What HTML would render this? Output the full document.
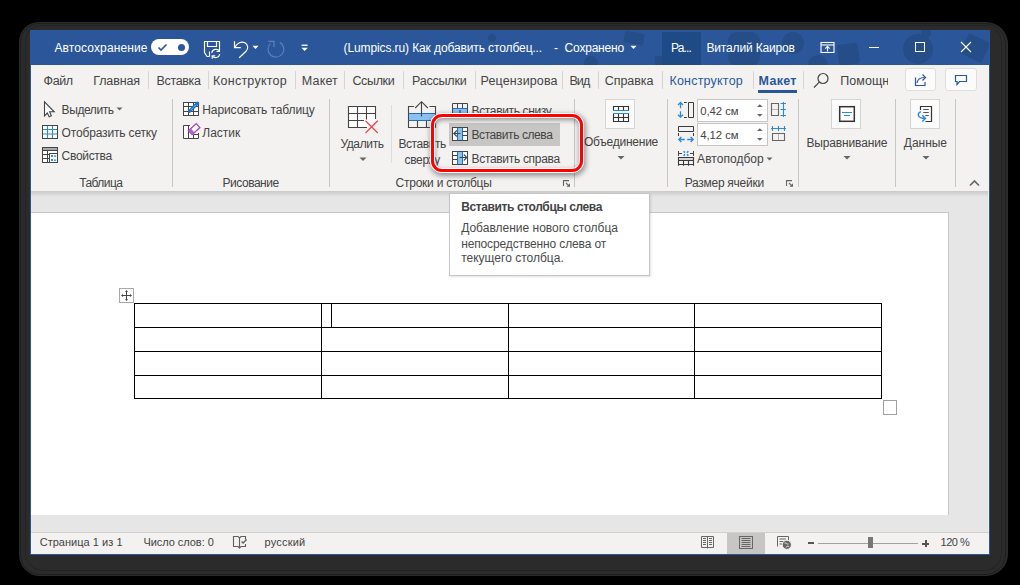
<!DOCTYPE html>
<html><head><meta charset="utf-8"><style>
html,body{margin:0;padding:0;}
body{width:1020px;height:585px;background:#000;position:relative;overflow:hidden;font-family:"Liberation Sans",sans-serif;}
.t{position:absolute;white-space:nowrap;line-height:1;}
.r{position:absolute;}
</style></head><body>
<div class="r" style="left:19px;top:22px;width:989px;height:554px;background:#2b2b2b;border-radius:20px 22px 22px 21px;"></div><div class="r" style="left:20px;top:23px;width:986px;height:552px;border:1px solid #1e1e1e;border-radius:19px 21px 21px 20px;box-sizing:border-box;"></div><div class="r" style="left:25px;top:25px;width:977px;height:546px;border:1px solid #232323;border-radius:16px 18px 18px 18px;box-sizing:border-box;"></div><div class="r" style="left:30px;top:30px;width:960px;height:525px;background:#f3f2f1;border:1px solid #2b579a;box-sizing:border-box;"></div><div class="r" style="left:30px;top:30px;width:960px;height:35px;background:#2b579a;"></div><svg class="r" style="left:31px;top:30px" width="958" height="35" viewBox="31 0 958 35">
<g fill="#254d88">
<circle cx="918" cy="19" r="15"/><circle cx="926" cy="3" r="5"/>
<rect x="838" y="14" width="21" height="21" rx="3" transform="rotate(-8 848 25)"/>
<path d="M808 35 A10 10 0 0 1 828 35 Z"/>
<circle cx="793" cy="13" r="11"/>
<rect x="963" y="7" width="24" height="22" rx="3" transform="rotate(25 975 18)"/>
<rect x="728" y="2" width="32" height="34" rx="9"/>
<rect x="624" y="2" width="20" height="12" rx="3" transform="rotate(10 634 8)"/>
<circle cx="591" cy="33" r="7"/>
<circle cx="492" cy="8" r="4"/>
<rect x="655" y="26" width="14" height="10" rx="2"/>
</g></svg><div class="t" style="left:54.50px;top:42.34px;font-size:12px;color:#fff;letter-spacing:0.110px;">Автосохранение</div><div class="r" style="left:151px;top:39px;width:38px;height:16px;background:#fff;border-radius:8px;"></div><svg class="r" style="left:157px;top:43px" width="11" height="9" viewBox="0 0 11 9"><path d="M1.5 4.5 L4 7 L9.5 1.5" fill="none" stroke="#2b579a" stroke-width="1.6"/></svg><div class="r" style="left:177.8px;top:43.7px;width:7px;height:7px;background:#2b579a;border-radius:50%;"></div><svg class="r" style="left:203px;top:40px" width="19" height="19" viewBox="0 0 19 19"><g fill="none" stroke="#fff" stroke-width="1.15">
<path d="M16.5 8.5 V1.5 H1.5 V12.5 L4 16.5 H6.5"/><path d="M4.5 1.5 V6.5 H13.5 V1.5"/><path d="M6.5 11.5 V16.5"/>
<path d="M8.8 12.8 A4.3 4.3 0 0 1 16.5 11"/><path d="M16.8 14.2 A4.3 4.3 0 0 1 9.2 16"/>
<path d="M16.5 8.3 V11.3 H13.5"/><path d="M9.2 18.8 V15.8 H12.2"/>
</g></svg><svg class="r" style="left:232px;top:40px" width="18" height="19" viewBox="0 0 18 19"><g fill="none" stroke="#fff" stroke-width="1.2"><path d="M2.5 1.3 V7.7 H8.8"/><path d="M2.6 7.6 C5 3 9.5 0.8 13 2.8 C16.3 4.8 16.5 8.8 14 11.3 L7.2 17.7"/></g></svg><svg class="r" style="left:252px;top:45px" width="7" height="5" viewBox="0 0 7 5"><path d="M0.5 0.8 H6.5 L3.5 4 Z" fill="#fff"/></svg><svg class="r" style="left:266px;top:39px" width="20" height="20" viewBox="0 0 20 20"><g fill="none" stroke="#5b80bb" stroke-width="1.2"><path d="M13.85 3.36 A7.9 7.9 0 1 1 4.3 4.6"/><path d="M2.3 2.3 H8 V7.9"/></g></svg><svg class="r" style="left:300px;top:44px" width="9" height="8" viewBox="0 0 9 8"><g fill="#fff"><rect x="1.6" y="0.6" width="6" height="1.3"/><path d="M1.4 3.8 H7.8 L4.6 7 Z"/></g></svg><div class="t" style="left:343.60px;top:42.34px;font-size:12px;color:#fff;letter-spacing:-0.110px;">(Lumpics.ru) Как добавить столбец...</div><div class="t" style="left:554.00px;top:42.34px;font-size:12px;color:#fff;letter-spacing:0.000px;">-</div><div class="t" style="left:564.60px;top:42.34px;font-size:12px;color:#fff;letter-spacing:-0.205px;">Сохранено</div><svg class="r" style="left:630px;top:45px" width="7" height="5" viewBox="0 0 7 5"><path d="M0.5 0.8 H6.5 L3.5 4 Z" fill="#fff"/></svg><div class="r" style="left:662px;top:32px;width:39px;height:33px;background:#1e4a86;"></div><div class="t" style="left:671.00px;top:41.94px;font-size:12px;color:#fff;letter-spacing:-0.853px;">Ра...</div><div class="t" style="left:706.50px;top:41.94px;font-size:12px;color:#fff;letter-spacing:-0.168px;">Виталий Каиров</div><svg class="r" style="left:820px;top:41px" width="15" height="12" viewBox="0 0 15 12"><g fill="none" stroke="#fff" stroke-width="1.1"><rect x="1" y="1.5" width="13" height="10"/><path d="M1 4 H14"/><path d="M7.5 10.5 V5.5 M5.3 7.6 L7.5 5.4 L9.7 7.6"/></g></svg><div class="r" style="left:869px;top:47px;width:10px;height:1px;background:#fff;"></div><div class="r" style="left:915px;top:42px;width:10px;height:10px;border:1px solid #fff;box-sizing:border-box;"></div><svg class="r" style="left:960px;top:41px" width="12" height="12" viewBox="0 0 12 12"><g stroke="#fff" stroke-width="1.1"><path d="M1 1 L11 11 M11 1 L1 11"/></g></svg><div class="r" style="left:148px;top:71px;width:1px;height:18px;background:#d6d5d4;"></div><div class="r" style="left:208px;top:71px;width:1px;height:18px;background:#d6d5d4;"></div><div class="r" style="left:295px;top:71px;width:1px;height:18px;background:#d6d5d4;"></div><div class="r" style="left:344px;top:71px;width:1px;height:18px;background:#d6d5d4;"></div><div class="r" style="left:403px;top:71px;width:1px;height:18px;background:#d6d5d4;"></div><div class="r" style="left:475px;top:71px;width:1px;height:18px;background:#d6d5d4;"></div><div class="r" style="left:562px;top:71px;width:1px;height:18px;background:#d6d5d4;"></div><div class="r" style="left:598px;top:71px;width:1px;height:18px;background:#d6d5d4;"></div><div class="r" style="left:662px;top:71px;width:1px;height:18px;background:#d6d5d4;"></div><div class="r" style="left:753px;top:71px;width:1px;height:18px;background:#d6d5d4;"></div><div class="r" style="left:803px;top:71px;width:1px;height:18px;background:#d6d5d4;"></div><div class="t" style="left:43.50px;top:74.92px;font-size:12.5px;color:#444444;letter-spacing:-0.359px;">Файл</div><div class="t" style="left:93.20px;top:74.92px;font-size:12.5px;color:#444444;letter-spacing:-0.111px;">Главная</div><div class="t" style="left:156.50px;top:74.92px;font-size:12.5px;color:#444444;letter-spacing:-0.338px;">Вставка</div><div class="t" style="left:213.00px;top:74.92px;font-size:12.5px;color:#444444;letter-spacing:0.249px;">Конструктор</div><div class="t" style="left:301.80px;top:74.92px;font-size:12.5px;color:#444444;letter-spacing:0.168px;">Макет</div><div class="t" style="left:352.40px;top:74.92px;font-size:12.5px;color:#444444;letter-spacing:-0.336px;">Ссылки</div><div class="t" style="left:412.00px;top:74.92px;font-size:12.5px;color:#444444;letter-spacing:-0.201px;">Рассылки</div><div class="t" style="left:480.60px;top:74.92px;font-size:12.5px;color:#444444;letter-spacing:0.118px;">Рецензирова</div><div class="t" style="left:569.40px;top:74.92px;font-size:12.5px;color:#444444;letter-spacing:-0.875px;">Вид</div><div class="t" style="left:604.70px;top:74.92px;font-size:12.5px;color:#444444;letter-spacing:-0.035px;">Справка</div><div class="t" style="left:669.40px;top:74.92px;font-size:12.5px;color:#2b579a;letter-spacing:0.212px;">Конструктор</div><div class="t" style="left:758.50px;top:74.92px;font-size:12.5px;color:#2b579a;letter-spacing:0.326px;font-weight:bold;">Макет</div><div class="r" style="left:758px;top:90px;width:39px;height:3px;background:#2b579a;"></div><svg class="r" style="left:812px;top:72px" width="18" height="17" viewBox="0 0 18 17"><g fill="none" stroke="#444" stroke-width="1.2"><circle cx="11" cy="6.5" r="5"/><path d="M7.3 10.2 L2 15.5"/></g></svg><div class="t" style="left:840.20px;top:74.92px;font-size:12.5px;color:#444444;letter-spacing:0.055px;width:47.5px;overflow:hidden;height:16px;">Помощн</div><div class="r" style="left:905px;top:68px;width:31px;height:23px;background:#fbfbfb;border:1px solid #dedede;border-radius:3px;box-sizing:border-box;"></div><svg class="r" style="left:912px;top:72px" width="16" height="15" viewBox="0 0 16 15"><g fill="none" stroke="#2b579a" stroke-width="1.2"><path d="M3.5 5.5 V13.5 H13 V10"/><path d="M5 11 C5.5 7.5 8 5.5 12.5 5.5"/><path d="M10.5 2.5 L13.5 5.5 L10.5 8.5"/></g></svg><div class="r" style="left:945px;top:68px;width:32px;height:23px;background:#fbfbfb;border:1px solid #dedede;border-radius:3px;box-sizing:border-box;"></div><svg class="r" style="left:954px;top:74px" width="14" height="12" viewBox="0 0 14 12"><g fill="none" stroke="#2b579a" stroke-width="1.2"><path d="M1.5 1.5 H12.5 V7.5 H5.5 L3 10.5 V7.5 H1.5 Z"/></g></svg><div class="r" style="left:172px;top:99px;width:1px;height:88px;background:#c8c6c4;"></div><div class="r" style="left:329px;top:99px;width:1px;height:88px;background:#c8c6c4;"></div><div class="r" style="left:574px;top:99px;width:1px;height:88px;background:#c8c6c4;"></div><div class="r" style="left:667px;top:99px;width:1px;height:88px;background:#c8c6c4;"></div><div class="r" style="left:798px;top:99px;width:1px;height:88px;background:#c8c6c4;"></div><div class="r" style="left:895px;top:99px;width:1px;height:88px;background:#c8c6c4;"></div><div class="r" style="left:955px;top:99px;width:1px;height:88px;background:#c8c6c4;"></div><div class="r" style="left:391px;top:105px;width:1px;height:58px;background:#dedcdb;"></div><div class="t" style="left:61.60px;top:104.34px;font-size:12px;color:#444444;letter-spacing:-0.420px;">Выделить</div><div class="t" style="left:61.60px;top:127.34px;font-size:12px;color:#444444;letter-spacing:-0.162px;">Отобразить сетку</div><div class="t" style="left:61.60px;top:150.34px;font-size:12px;color:#444444;letter-spacing:-0.311px;">Свойства</div><div class="t" style="left:79.20px;top:177.14px;font-size:12px;color:#444444;letter-spacing:-0.538px;">Таблица</div><div class="t" style="left:202.30px;top:104.34px;font-size:12px;color:#444444;letter-spacing:-0.100px;">Нарисовать таблицу</div><div class="t" style="left:202.30px;top:127.34px;font-size:12px;color:#444444;letter-spacing:0.000px;">Ластик</div><div class="t" style="left:222.60px;top:177.14px;font-size:12px;color:#444444;letter-spacing:-0.491px;">Рисование</div><div class="t" style="left:340.40px;top:137.74px;font-size:12px;color:#444444;letter-spacing:-0.359px;">Удалить</div><div class="t" style="left:398.40px;top:138.24px;font-size:12px;color:#444444;letter-spacing:-0.432px;">Вставить</div><div class="t" style="left:404.60px;top:153.74px;font-size:12px;color:#444444;letter-spacing:-0.374px;">сверху</div><div class="t" style="left:471.50px;top:105.14px;font-size:12px;color:#444444;letter-spacing:-0.348px;">Вставить снизу</div><div class="t" style="left:395.60px;top:177.14px;font-size:12px;color:#444444;letter-spacing:-0.248px;">Строки и столбцы</div><div class="r" style="left:449px;top:123px;width:111px;height:23px;background:#c8c6c4;"></div><div class="t" style="left:471.50px;top:128.94px;font-size:12px;color:#444444;letter-spacing:-0.419px;">Вставить слева</div><div class="t" style="left:471.50px;top:152.94px;font-size:12px;color:#444444;letter-spacing:-0.309px;">Вставить справа</div><div class="r" style="left:605px;top:99px;width:30px;height:30px;background:#fbfbfb;border:1px solid #d4d4d4;box-sizing:border-box;"></div><div class="t" style="left:584.00px;top:136.24px;font-size:12px;color:#444444;letter-spacing:-0.247px;">Объединение</div><div class="r" style="left:697px;top:99px;width:71px;height:23px;background:#fff;border:1px solid #c8c6c4;box-sizing:border-box;"></div><div class="t" style="left:700.30px;top:105.63px;font-size:11.3px;color:#444444;letter-spacing:-0.050px;">0,42 см</div><div class="r" style="left:697px;top:123px;width:71px;height:23px;background:#fff;border:1px solid #c8c6c4;box-sizing:border-box;"></div><div class="t" style="left:700.30px;top:130.03px;font-size:11.3px;color:#444444;letter-spacing:-0.050px;">4,12 см</div><div class="t" style="left:697.10px;top:152.84px;font-size:12px;color:#444444;letter-spacing:0.043px;">Автоподбор</div><div class="t" style="left:684.70px;top:176.84px;font-size:12px;color:#444444;letter-spacing:-0.272px;">Размер ячейки</div><div class="r" style="left:831px;top:99px;width:30px;height:30px;background:#fbfbfb;border:1px solid #d4d4d4;box-sizing:border-box;"></div><div class="t" style="left:806.40px;top:136.74px;font-size:12px;color:#444444;letter-spacing:-0.148px;">Выравнивание</div><div class="r" style="left:910px;top:99px;width:30px;height:30px;background:#fbfbfb;border:1px solid #d4d4d4;box-sizing:border-box;"></div><div class="t" style="left:903.80px;top:136.74px;font-size:12px;color:#444444;letter-spacing:-0.024px;">Данные</div><svg class="r" style="left:0;top:0" width="1020" height="585" viewBox="0 0 1020 585">
<g fill="none" stroke="#444" stroke-width="1">
<!-- cursor -->
<path d="M44.5 101.8 V115.8 L47.3 113 L49.2 116.8 L51.4 115.8 L49.6 111.8 L54.2 111.8 Z" fill="#fff" stroke-width="1.1"/>
<!-- grid icon -->
<rect x="42.5" y="125.5" width="15" height="13" fill="#fff"/>
<!-- properties -->
<rect x="42.5" y="147.5" width="15" height="15" fill="#fff"/>
<path d="M42.5 150.5 H57.5 M47.5 150.5 V162.5 M42.5 154.5 H49.5 M42.5 158.5 H49.5"/><rect x="43" y="148" width="14" height="2" fill="#a8a8a8" stroke="none"/>
<rect x="49.5" y="153.5" width="8" height="9" fill="#fff"/>
<!-- draw table -->
<rect x="183.5" y="102.5" width="15" height="13" fill="#fff"/>
<path d="M188.5 102.5 V115.5 M193.5 102.5 V115.5 M183.5 106.5 H198.5 M183.5 111.5 H198.5"/>
<!-- eraser frame -->
<path d="M190 125.5 H183.5 V138.5 H198.5 V133 M188.5 125.5 V138.5 M193.5 134.5 V138.5 M193.5 134.5 H198.5" fill="#fff"/>
<!-- delete icon -->
<path d="M367 127.5 H348.5 V106.5 H375.5 V119 M357.5 106.5 V127.5 M366.5 106.5 V119.5 M348.5 113.5 H375.5 M348.5 120.5 H364" fill="#fff" stroke-width="1.1"/>
<!-- insert above -->
<path d="M414 106.5 H408.5 V127.5 H435.5 V106.5 H429.5 M417.5 120.5 V127.5 M426.5 120.5 V127.5" stroke-width="1.1"/>
<!-- insert below (partial) -->
<path d="M452.5 113 V103.5 H467.5 V113 M457.5 103.5 V108 M462.5 103.5 V108"/>
<!-- insert left -->
<rect x="452.5" y="127.5" width="15" height="13" fill="#fff"/>
<!-- insert right -->
<rect x="452.5" y="151.5" width="15" height="13" fill="#fff"/>
</g>
<g stroke="#2a8ad4" stroke-width="1.1" fill="none">
<path d="M43 129.5 H57 M43 134 H57 M47.5 126 V138 M52.5 126 V138"/>
</g>
<g fill="#2a8ad4"><rect x="51" y="155" width="2" height="2"/><rect x="54" y="155.5" width="2.2" height="1.3"/><rect x="51" y="159" width="2" height="2"/><rect x="54" y="159.5" width="2.2" height="1.3"/></g>
<!-- pencil -->
<path d="M189.6 111.2 L197.6 103.2" stroke="#1a73c9" stroke-width="3.2" stroke-linecap="round"/>
<path d="M190.8 110 L196.6 104.2" stroke="#cfe3f7" stroke-width="0.8" stroke-dasharray="1 1"/>
<!-- eraser -->
<g transform="rotate(-42 194 129.3)"><rect x="189" y="126.6" width="10.5" height="5.4" fill="#fff" stroke="#a346c3" stroke-width="1.3"/><rect x="189" y="126.6" width="3.2" height="5.4" fill="#b15fd0"/></g>
<!-- red X -->
<path d="M365.5 120.8 L377.8 133 M377.8 120.8 L365.5 133" stroke="#e5484d" stroke-width="1.2"/>
<!-- insert above blue band -->
<rect x="409" y="113.5" width="26" height="7" fill="#8cc0ee"/>
<path d="M408.5 113.5 H435.5 M408.5 120.5 H435.5" stroke="#1f6fc5" stroke-width="1.1"/>
<path d="M421.5 101.8 V116.5 M415.2 108 L421.5 101.7 L427.8 108" stroke="#444" stroke-width="1.1" fill="none"/>
<!-- insert below blue -->
<rect x="453" y="108.5" width="14" height="4.5" fill="#8cc0ee"/><path d="M452.5 108.5 H467.5" stroke="#1f6fc5"/><path d="M460 110 V113" stroke="#444" stroke-width="1.2"/>
<!-- insert left blue col -->
<rect x="458" y="128" width="4" height="12" fill="#8cc0ee"/>
<path d="M457.5 127.5 V140.5 M462.5 127.5 V140.5" stroke="#1f6fc5"/>
<path d="M462.5 131.5 H467.5 M462.5 135.5 H467.5" stroke="#444"/>
<path d="M460.5 133.5 H453.8 M456.8 130.5 L453.8 133.5 L456.8 136.5" stroke="#444" fill="none" stroke-width="1.1"/>
<!-- insert right blue col -->
<rect x="458" y="152" width="4" height="12" fill="#8cc0ee"/>
<path d="M457.5 151.5 V164.5 M462.5 151.5 V164.5" stroke="#1f6fc5"/>
<path d="M452.5 155.5 H457.5 M452.5 159.5 H457.5" stroke="#444"/>
<path d="M459.5 157.5 H466.8 M463.8 154.5 L466.8 157.5 L463.8 160.5" stroke="#444" fill="none" stroke-width="1.1"/>
<!-- merge icon -->
<g fill="none" stroke="#333" stroke-width="1.1">
<path d="M613.5 110.5 V106.5 H628.5 V110.5 M618.5 106.5 V110.5 M623.5 106.5 V110.5"/>
<path d="M613.5 113.5 V121.5 H628.5 V113.5 M613.5 117.5 H628.5 M618.5 113.5 V121.5 M623.5 113.5 V121.5"/>
</g>
<path d="M613 110.5 H629 M613 113.5 H629" stroke="#2a8ad4" stroke-width="1.2"/><rect x="612.5" y="111.2" width="17" height="1.6" fill="#fbfbfb"/>
<!-- height icon -->
<path d="M688.5 102.5 H693.5 V117.5 H688.5 Z M684 102.5 H686.8 M684 117.5 H686.8" stroke="#3a3a3a" fill="none"/>
<path d="M680.5 102.5 V108.3 M680.5 111.3 V117 M678 105 L680.5 102.5 L683 105 M678 114.7 L680.5 117.2 L683 114.7" stroke="#2a8ad4" stroke-width="1.3" fill="none"/>
<!-- distribute rows -->
<path d="M771.5 103.5 H778.5 V115.5 H771.5 Z" stroke="#666" fill="none" stroke-width="1.1"/><path d="M772 109.5 H778" stroke="#b4b4b4"/>
<path d="M783.5 102 V117 M780.5 103.5 H786 M780.5 109.5 H786 M780.5 115.5 H786" stroke="#2a8ad4" stroke-width="1.1" fill="none"/>
<!-- width icon -->
<path d="M678.5 126.5 H693.5 V131.5 H678.5 Z M678.5 133 V136 M693.5 133 V136" stroke="#3a3a3a" fill="none"/>
<path d="M678.8 139.5 H684.8 M687.2 139.5 H693.2 M681.3 137 L678.8 139.5 L681.3 142 M690.7 137 L693.2 139.5 L690.7 142" stroke="#2a8ad4" stroke-width="1.3" fill="none"/>
<!-- distribute cols -->
<path d="M772.5 133.5 H784.5 V140.5 H772.5 Z" stroke="#666" fill="none" stroke-width="1.1"/><path d="M778.5 134 V140" stroke="#b4b4b4"/>
<path d="M771 128.5 H786 M772.5 126 V131 M778.5 126 V131 M784.5 126 V131" stroke="#2a8ad4" stroke-width="1.1" fill="none"/>
<!-- autofit -->
<path d="M678.5 151 V156 M693.5 151 V156 M678.5 153.5 H682 M690 153.5 H693.5" stroke="#444" fill="none"/>
<rect x="679" y="158" width="14" height="2.2" fill="#d4d4d4"/>
<path d="M678.5 165.8 V157.5 H693.5 V165.8 M678.5 160.5 H693.5 M678.5 164.5 H693.5 M683.5 160.5 V165.8 M688.5 160.5 V165.8" stroke="#3a3a3a" fill="none" stroke-width="1.1"/>
<path d="M683.6 151.2 L685 152.6 M688.4 151.2 L687 152.6 M683.6 155.8 L685 154.4 M688.4 155.8 L687 154.4" stroke="#2a8ad4" stroke-width="1.5"/>
<!-- align icon -->
<rect x="839.7" y="106.7" width="14.6" height="14.6" fill="#fff" stroke="#333" stroke-width="1.5"/>
<path d="M842 112.5 H852 M844 115.5 H850" stroke="#2a8ad4" stroke-width="1.2"/>
<!-- data icon -->
<path d="M920.5 110 V106.5 H931.5 V121.5 H925.5" stroke="#333" stroke-width="1.2" fill="none"/>
<path d="M923.2 109.5 H928.8 M923.2 112.5 H928.8 M925.3 115.5 H928.8" stroke="#555" stroke-width="1"/>
<path d="M920.8 111.6 C916.8 113.6 917.3 118.4 925.2 118.4 M922.3 115.2 L925.5 118.4 L922.3 121.6" stroke="#2a8ad4" stroke-width="1.4" fill="none"/>
<!-- dropdown triangles -->
<g fill="#666">
<path d="M116.5 107.5 H122.5 L119.5 110.5 Z"/>
<path d="M359.5 157.5 H366.5 L363 161 Z"/>
<path d="M617.5 156 H624.5 L621 159.5 Z"/>
<path d="M766.5 157.5 H772.5 L769.5 160.5 Z"/>
<path d="M843.5 156 H850.5 L847 159.5 Z"/>
<path d="M922.5 156 H929.5 L926 159.5 Z"/>
</g>
<!-- spinners -->
<g fill="#666">
<path d="M757 107 L759.8 104.2 L762.6 107 Z M757 114 L759.8 116.8 L762.6 114 Z"/>
<path d="M757 131 L759.8 128.2 L762.6 131 Z M757 138 L759.8 140.8 L762.6 138 Z"/>
</g>
<!-- launchers -->
<g fill="none" stroke="#666" stroke-width="1.1">
<path d="M563.5 186 V180.6 H569"/><path d="M566 183 L569 186"/>
<path d="M786.5 186 V180.6 H792"/><path d="M789 183 L792 186"/>
</g>
<g fill="#666"><path d="M566.5 186.8 H570 V183.3 Z"/><path d="M789.5 186.8 H793 V183.3 Z"/></g>
<path d="M970 185.5 L974.5 181 L979 185.5" fill="none" stroke="#666" stroke-width="1.7"/>
</svg><div class="r" style="left:431px;top:114px;width:152px;height:57.5px;border:3.2px solid #ff0000;border-radius:11px;box-shadow:0 0 0 1.1px #fff, 1px 2px 5px 1.5px rgba(0,0,0,0.38), inset 0 0 0 1.1px #fff, inset 0 2px 5px 1px rgba(0,0,0,0.4);box-sizing:border-box;"></div><div class="r" style="left:31px;top:191px;width:958px;height:341px;background:#e6e6e6;"></div><div class="r" style="left:31px;top:191px;width:958px;height:6px;background:linear-gradient(#c9c9c9,#e6e6e6);"></div><div class="r" style="left:31px;top:212px;width:918px;height:303px;background:#fff;border-right:1px solid #c6c6c6;border-top:1px solid #c6c6c6;box-sizing:border-box;"></div><div class="r" style="left:30px;top:191px;width:1px;height:364px;background:#2b579a;"></div><div class="r" style="left:988px;top:191px;width:1px;height:341px;background:#f0efee;"></div><div class="r" style="left:134px;top:303px;width:748.3px;height:1.3px;background:#000;"></div><div class="r" style="left:134px;top:327px;width:748.3px;height:1.3px;background:#000;"></div><div class="r" style="left:134px;top:351px;width:748.3px;height:1.3px;background:#000;"></div><div class="r" style="left:134px;top:375px;width:748.3px;height:1.3px;background:#000;"></div><div class="r" style="left:134px;top:398px;width:748.3px;height:1.3px;background:#000;"></div><div class="r" style="left:134px;top:303px;width:1.3px;height:96.3px;background:#000;"></div><div class="r" style="left:321px;top:303px;width:1.3px;height:96.3px;background:#000;"></div><div class="r" style="left:508px;top:303px;width:1.3px;height:96.3px;background:#000;"></div><div class="r" style="left:694px;top:303px;width:1.3px;height:96.3px;background:#000;"></div><div class="r" style="left:881px;top:303px;width:1.3px;height:96.3px;background:#000;"></div><div class="r" style="left:331px;top:303px;width:1.3px;height:25px;background:#000;"></div><div class="r" style="left:119px;top:288px;width:15px;height:15px;border:1px solid #a8a8a8;box-sizing:border-box;background:#fff;"></div><svg class="r" style="left:120px;top:289px" width="13" height="13" viewBox="0 0 13 13"><g stroke="#444" stroke-width="1" fill="#444"><path d="M6.5 2 V11 M2 6.5 H11" fill="none"/><path d="M6.5 1 L5 3 H8 Z M6.5 12 L5 10 H8 Z M1 6.5 L3 5 V8 Z M12 6.5 L10 5 V8 Z" stroke="none"/></g></svg><div class="r" style="left:883px;top:400px;width:14px;height:15px;border:1px solid #a0a0a0;box-sizing:border-box;background:#fff;"></div><div class="r" style="left:449px;top:193px;width:201px;height:83px;background:#fff;border:1px solid #c6c6c6;box-sizing:border-box;box-shadow:1px 1px 2px rgba(0,0,0,0.12);"></div><div class="t" style="left:461.20px;top:201.34px;font-size:12px;color:#444;letter-spacing:-0.381px;font-weight:bold;">Вставить столбцы слева</div><div class="t" style="left:461.20px;top:222.44px;font-size:12px;color:#4a4a4a;letter-spacing:0.000px;">Добавление нового столбца</div><div class="t" style="left:461.20px;top:237.54px;font-size:12px;color:#4a4a4a;letter-spacing:-0.134px;">непосредственно слева от</div><div class="t" style="left:461.20px;top:252.14px;font-size:12px;color:#4a4a4a;letter-spacing:0.003px;">текущего столбца.</div><div class="r" style="left:31px;top:532px;width:958px;height:1px;background:#d2d0ce;"></div><div class="r" style="left:31px;top:533px;width:958px;height:21px;background:#f3f2f1;"></div><div class="t" style="left:39.70px;top:536.69px;font-size:11px;color:#444444;letter-spacing:0.028px;">Страница 1 из 1</div><div class="t" style="left:143.40px;top:537.19px;font-size:11px;color:#444444;letter-spacing:-0.044px;">Число слов: 0</div><svg class="r" style="left:226px;top:532px" width="28" height="20" viewBox="0 0 28 20"><g fill="none" stroke="#606060" stroke-width="1.1"><path d="M12 4.5 H7.5 V14.5 H12 L13.5 16 L15 14.5 H19.5 V12"/><path d="M12 4.5 L13.5 6 L15 4.5 H19.5 V7.5"/><path d="M13.5 6 V16.3"/><path d="M15.6 9.6 L17.1 11.1 L20.6 7.6" stroke-width="1.4"/></g></svg><div class="t" style="left:264.50px;top:537.19px;font-size:11px;color:#444444;letter-spacing:0.204px;">русский</div><svg class="r" style="left:696px;top:532px" width="100" height="22" viewBox="0 0 100 22"><g fill="none" stroke="#666" stroke-width="1">
<path d="M5.5 4.5 H17.5 V15.5 H5.5 Z M11.5 4.5 V16.5"/>
<path d="M7 6.5 H10 M7 8.5 H10 M7 10.5 H10 M7 12.5 H10 M13 6.5 H16 M13 8.5 H16 M13 10.5 H16 M13 12.5 H16"/>
</g></svg><div class="r" style="left:727px;top:533px;width:38px;height:21px;background:#c8c6c4;"></div><svg class="r" style="left:696px;top:532px" width="100" height="22" viewBox="0 0 100 22"><g fill="none" stroke="#666" stroke-width="1">
<rect x="43.5" y="4.5" width="13" height="12"/>
<path d="M45.5 6.5 H54.5 M45.5 8.5 H54.5 M45.5 10.5 H54.5 M45.5 12.5 H54.5 M45.5 14.5 H54.5"/>
<path d="M81.5 14.5 V4.5 H92.5 V8"/><path d="M83.5 7 H90 M83.5 9.5 H89 M83.5 12 H86"/>
</g>
<circle cx="90.8" cy="12.8" r="4.6" fill="#666" stroke="#f3f2f1" stroke-width="1"/>
<path d="M88.5 11 C90 10.5 90.5 12.5 92.5 12 M90 15.5 C90.5 14 92 14 93 14.5" stroke="#f3f2f1" stroke-width="0.9" fill="none"/></svg><div class="r" style="left:808px;top:542px;width:6px;height:2px;background:#555;"></div><div class="r" style="left:818px;top:543px;width:100px;height:1px;background:#a0a0a0;"></div><div class="r" style="left:868px;top:537px;width:5px;height:11px;background:#777;"></div><div class="r" style="left:922px;top:542.5px;width:7px;height:2px;background:#555;"></div><div class="r" style="left:924.5px;top:540px;width:2px;height:7px;background:#555;"></div><div class="t" style="left:940.60px;top:537.19px;font-size:11px;color:#444444;letter-spacing:-0.484px;">120 %</div>
</body></html>
